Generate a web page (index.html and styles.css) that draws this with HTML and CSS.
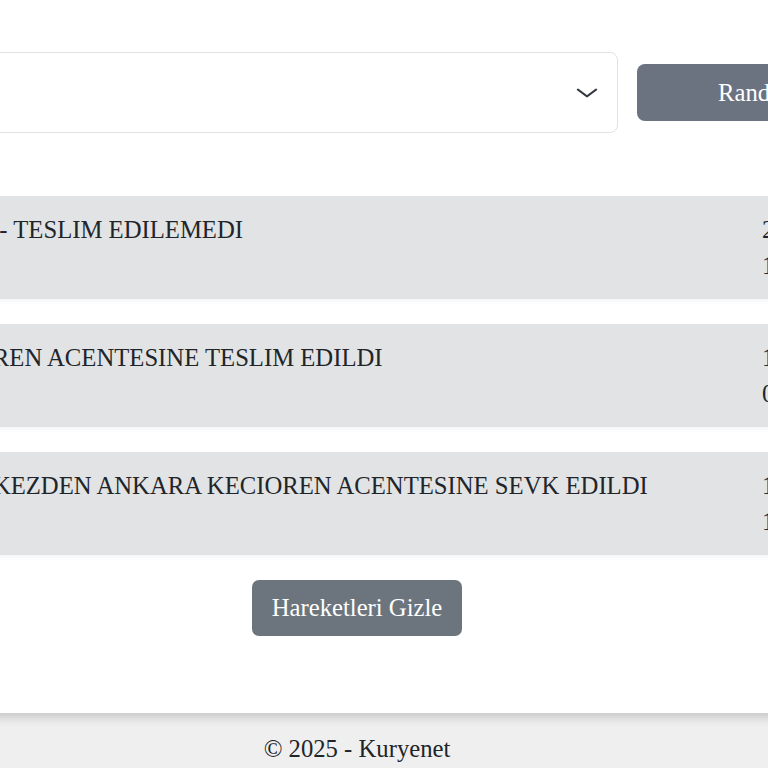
FILE: index.html
```html
<!DOCTYPE html>
<html lang="tr">
<head>
  <meta charset="UTF-8">
  <title>Kargo Takip</title>
  <link rel="stylesheet" href="styles.css">
</head>
<body>
  <div class="card">
    <div class="toolbar">
      <div class="select">
        <span class="select-value"></span>
        <svg class="chevron" width="24" height="18" viewBox="0 0 16 16" preserveAspectRatio="none">
          <path d="m2 5 6 6 6-6" fill="none" stroke="#343a40" stroke-width="1.7" stroke-linecap="round" stroke-linejoin="round"/>
        </svg>
      </div>
      <button class="btn btn-appointment">Randevu Al</button>
    </div>

    <ul class="moves">
      <li class="move">
        <div class="move-text">ALICI TASINMIS - TESLIM EDILEMEDI</div>
        <div class="move-date">21.01.2025<br>15:12</div>
      </li>
      <li class="move">
        <div class="move-text">ANKARA KECIOREN ACENTESINE TESLIM EDILDI</div>
        <div class="move-date">18.01.2025<br>09:40</div>
      </li>
      <li class="move">
        <div class="move-text">TRANSFER MERKEZDEN ANKARA KECIOREN ACENTESINE SEVK EDILDI</div>
        <div class="move-date">17.01.2025<br>18:25</div>
      </li>
    </ul>

    <div class="actions">
      <button class="btn btn-toggle">Hareketleri Gizle</button>
    </div>
  </div>

  <footer class="footer">&copy; 2025 - Kuryenet</footer>
</body>
</html>
```

FILE: styles.css
```css
*{
  padding: 0;
  margin: 0;
  box-sizing: border-box;
}
ul{
  list-style: none;
}
html, body{
  overflow: hidden;
}
body{
  background: #efefef;
  color: #212529;
  font-family: "Liberation Serif", "Times New Roman", serif;
  font-size: 24.7px;
  line-height: 36px;
  width: 768px;
  height: 768px;
}
.card{
  position: relative;
  z-index: 1;
  width: 1188px;
  margin-left: -237px;
  padding: 52px 20px 77px;
  background: #fff;
  box-shadow: 0 4px 10px rgba(0,0,0,.18);
}
.toolbar{
  display: flex;
  align-items: center;
  gap: 19px;
}
.select{
  flex: 1;
  display: flex;
  align-items: center;
  justify-content: space-between;
  height: 81px;
  padding: 0 18px 0 18px;
  border: 1px solid #e2e2e2;
  border-radius: 8px;
  background: #fff;
}
.chevron{
  display: block;
}
.btn{
  border: none;
  color: #fff;
  font-family: inherit;
  font-size: 24.7px;
  line-height: 36px;
  background: #6c757d;
  cursor: pointer;
}
.btn-appointment{
  flex: 0 0 294px;
  height: 57px;
  padding-left: 81px;
  text-align: left;
  border-radius: 8px;
  background: #6b7280;
}
.moves{
  display: flex;
  flex-direction: column;
  gap: 25px;
  margin-top: 63px;
}
.move{
  display: flex;
  justify-content: space-between;
  padding: 16px 24px 15px;
  background: #e2e3e5;
  box-shadow: 0 3px 4px rgba(0,0,0,.035);
}
.move-text{
  flex: 1;
  white-space: nowrap;
}
.move-date{
  flex: 0 0 145px;
  white-space: nowrap;
}
.actions{
  display: flex;
  justify-content: center;
  margin-top: 25px;
}
.btn-toggle{
  height: 56px;
  padding: 10px 19.5px;
  border-radius: 7px;
}
.footer{
  padding-top: 18px;
  text-align: center;
  margin-left: -54px;
  width: 822px;
}
```
